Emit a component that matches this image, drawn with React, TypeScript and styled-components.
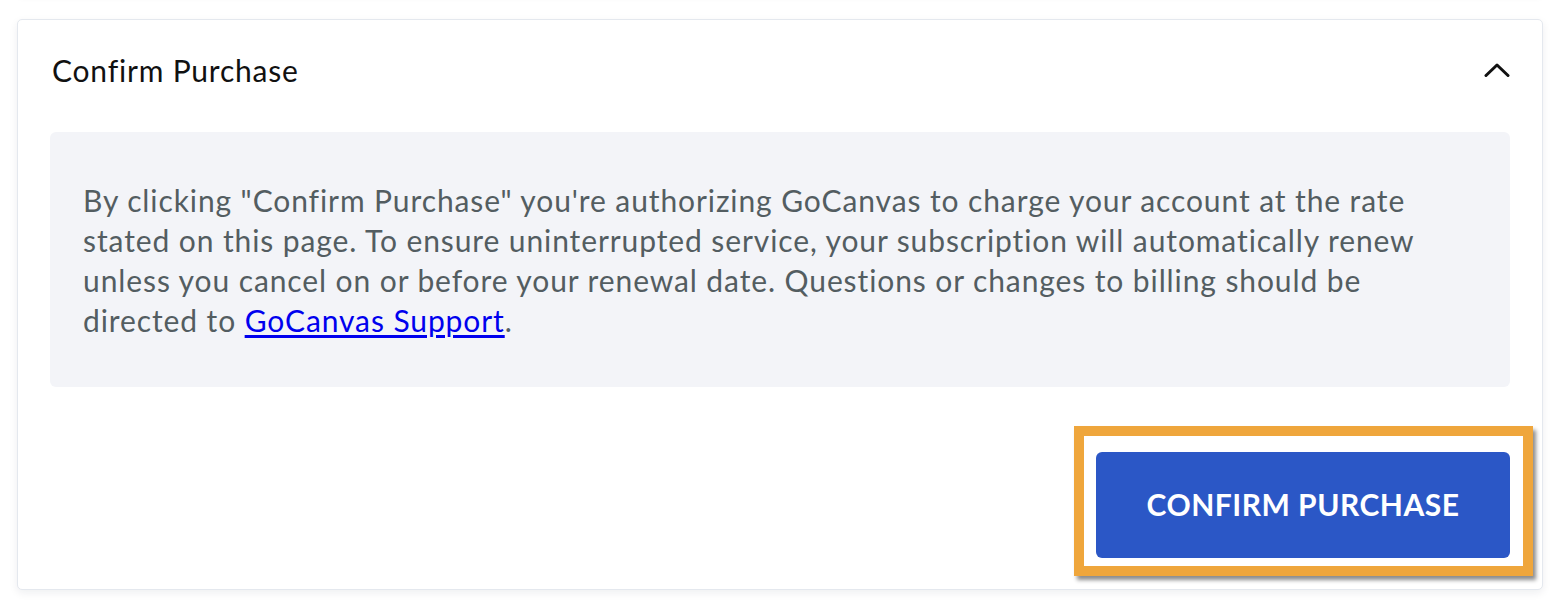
import React from "react";
import styled, { createGlobalStyle } from "styled-components";

const GlobalStyle = createGlobalStyle`
  html, body {
    margin: 0;
    padding: 0;
    background: #ffffff;
  }
  body {
    font-family: "Lato", "Liberation Sans", sans-serif;
    overflow: hidden;
  }
`;

const Page = styled.div`
  width: 1560px;
  height: 612px;
  padding: 19px 17px 0 17px;
  box-sizing: border-box;
`;

const PrevCard = styled.div`
  height: 40px;
  margin-top: -64px;
  margin-bottom: 24px;
  border-radius: 4px;
  background: #ffffff;
  box-shadow: 0 2px 6px rgba(20, 30, 50, 0.06);
`;

const Card = styled.div`
  border: 1px solid #e4e8ee;
  border-radius: 5px;
  background: #ffffff;
  box-shadow: 0 3px 8px rgba(20, 30, 50, 0.07);
`;

const Header = styled.div`
  height: 104px;
  padding: 0 32px 4px 34px;
  box-sizing: border-box;
  display: flex;
  align-items: center;
  justify-content: space-between;
`;

const Title = styled.div`
  font-size: 30px;
  letter-spacing: 0.8px;
  color: #111;
`;

const Body = styled.div`
  padding: 8px 32px 13px 32px;
`;

const Notice = styled.div`
  background: #f3f4f8;
  border-radius: 6px;
  padding: 48px 33px 47px 33px;
  font-size: 30px;
  letter-spacing: 0.9px;
  line-height: 40px;
  color: #535d61;
`;

const SupportLink = styled.a`
  color: #0000ee;
  text-decoration: underline;
  text-underline-offset: 3px;
`;

const Actions = styled.div`
  margin-top: 39px;
  display: flex;
  justify-content: flex-end;
`;

const Highlight = styled.div`
  margin-right: -23px;
  border: 10px solid #efa63c;
  padding: 16px 13px 8px 12px;
  box-shadow: 3px 4px 4px rgba(0, 0, 0, 0.45);
`;

const ConfirmButton = styled.button`
  width: 414px;
  height: 106px;
  padding: 0 0 2px 0;
  border: none;
  border-radius: 6px;
  background: #2b57c6;
  color: #ffffff;
  font-family: "Lato", "Liberation Sans", sans-serif;
  font-weight: 700;
  font-size: 30px;
  letter-spacing: 0.5px;
  cursor: pointer;
`;

function ChevronUp() {
  return (
    <svg width="26" height="16" viewBox="0 0 26 16" fill="none">
      <polyline
        points="2,13.5 13,3 24,13.5"
        stroke="#111"
        strokeWidth="3"
        strokeLinecap="round"
        strokeLinejoin="round"
      />
    </svg>
  );
}

export default function App() {
  return (
    <Page>
      <GlobalStyle />
      <PrevCard />
      <Card>
        <Header>
          <Title>Confirm Purchase</Title>
          <ChevronUp />
        </Header>
        <Body>
          <Notice>
            By clicking "Confirm Purchase" you're authorizing GoCanvas to charge
            your account at the rate
            <br />
            stated on this page. To ensure uninterrupted service, your
            subscription will automatically renew
            <br />
            unless you cancel on or before your renewal date. Questions or
            changes to billing should be
            <br />
            directed to <SupportLink href="#">GoCanvas Support</SupportLink>.
          </Notice>
          <Actions>
            <Highlight>
              <ConfirmButton>CONFIRM PURCHASE</ConfirmButton>
            </Highlight>
          </Actions>
        </Body>
      </Card>
    </Page>
  );
}
